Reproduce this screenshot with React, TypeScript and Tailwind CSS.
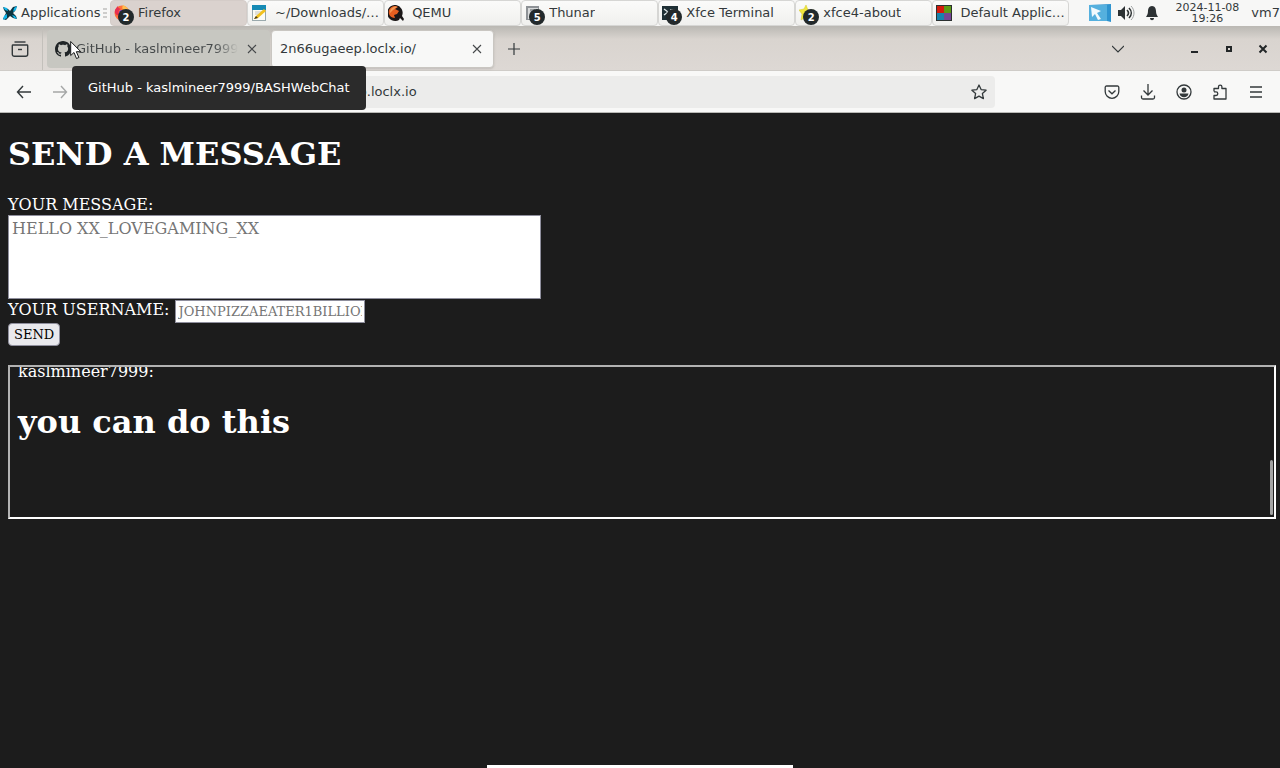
import type { ReactNode } from 'react';

interface TaskItem {
  title: string;
  icon: ReactNode;
  count?: number;
  active?: boolean;
}

function XfceLogo() {
  return (
    <svg viewBox="0 0 16 16" className="size-4 shrink-0" aria-hidden="true">
      <path d="M1 2l5 2 2 2 3-4 4-1-2 5-2 2 3 3 1 3-4-1-3-2-4 4-3-1 2-4 1-2-2-3z" fill="#0b3440" />
      <path d="M1 2l4 1 1 3-3-1zM15 1l-1 4-3 2 1-4zM1 15l1-4 3-2v4zM15 14l-3-1-2-3 3 1z" fill="#10b5ea" />
    </svg>
  );
}

function FirefoxIcon() {
  return (
    <svg viewBox="0 0 16 16" className="size-4" aria-hidden="true">
      <circle cx="8" cy="8" r="7.5" fill="#ff7139" />
      <path d="M1 5c1-2 2-3 3-4 0 2 1 2 3 3-3 1-3 4-1 6-3 1-6-1-5-5z" fill="#e8304f" />
      <path d="M9 0c4 2 6 4 6 8-1-2-3-3-5-3S8 2 9 0z" fill="#ffbd4f" />
      <circle cx="8" cy="8" r="3" fill="#7542e5" />
    </svg>
  );
}

function EditorIcon() {
  return (
    <svg viewBox="0 0 16 16" className="size-4" aria-hidden="true">
      <rect x="1.5" y=".5" width="13" height="15" fill="#fbfbf5" stroke="#9aa9ad" />
      <rect x="1" y="0" width="14" height="5" fill="#178bb5" />
      <path d="M4 7h7M4 9h5" stroke="#c5c5c0" />
      <path d="M13 4l2 2-8 7-4 1 2-3z" fill="#f2c11d" />
      <path d="M5 11l2 2-4 1z" fill="#4b3b18" />
    </svg>
  );
}

function QemuIcon() {
  return (
    <svg viewBox="0 0 16 16" className="size-4" aria-hidden="true">
      <path d="M8 0a8 8 0 1 0 3 15l1-2 3 3 1-2-2-3A8 8 0 0 0 8 0z" fill="#1b1717" />
      <path d="M1 5c2-4 6-5 9-3L7 4l4 2-2 3-3 1 1 3C2 13 0 9 1 5z" fill="#e65f20" />
      <path d="M3 4c2-2 4-3 6-2L5 5l-3 3c0-1 0-3 1-4z" fill="#f59a55" />
    </svg>
  );
}

function ThunarIcon() {
  return (
    <svg viewBox="0 0 16 16" className="size-4" aria-hidden="true">
      <rect x="1" y="1" width="13" height="14" fill="#8e9296" />
      <rect x="3" y="3" width="10" height="11" fill="#d8dadb" />
      <path d="M5 5h5M5 8h5M5 11h5" stroke="#5b6063" />
    </svg>
  );
}

function TerminalIcon() {
  return (
    <svg viewBox="0 0 16 16" className="size-4" aria-hidden="true">
      <rect x="0" y="1" width="16" height="14" fill="#1f3035" />
      <path d="M2 4l4 3-4 3M8 5h5" fill="none" stroke="#e6eded" strokeWidth="1.3" />
    </svg>
  );
}

function StarIcon() {
  return (
    <svg viewBox="0 0 16 16" className="size-4" aria-hidden="true">
      <path d="M7 0l2 5 6 0-4 4 2 6-6-3-5 3 1-6-3-4 5-1z" fill="#f0e63c" stroke="#d5c92d" strokeWidth=".5" />
    </svg>
  );
}

function DefaultAppsIcon() {
  return (
    <svg viewBox="0 0 16 16" className="size-4" aria-hidden="true">
      <rect width="16" height="16" fill="#2b3030" />
      <rect x="1" y="1" width="7" height="7" fill="#d21a0c" />
      <rect x="8" y="1" width="7" height="7" fill="#5c9a14" />
      <rect x="1" y="8" width="7" height="7" fill="#1683ac" />
      <rect x="8" y="8" width="7" height="7" fill="#744594" />
    </svg>
  );
}

const tasks: TaskItem[] = [
  { title: 'Firefox', icon: <FirefoxIcon />, count: 2, active: true },
  { title: '~/Downloads/…', icon: <EditorIcon /> },
  { title: 'QEMU', icon: <QemuIcon /> },
  { title: 'Thunar', icon: <ThunarIcon />, count: 5 },
  { title: 'Xfce Terminal', icon: <TerminalIcon />, count: 4 },
  { title: 'xfce4-about', icon: <StarIcon />, count: 2 },
  { title: 'Default Applic…', icon: <DefaultAppsIcon /> },
];

function TaskButton({ title, icon, count, active }: TaskItem) {
  return (
    <button
      type="button"
      className={`flex h-full min-w-0 flex-1 items-center gap-2 rounded-sm border pl-[3px] text-left ${
        active
          ? 'border-[#d4ccc8] bg-[#dad2ce]'
          : 'border-[#d6d6d4] bg-gradient-to-b from-[#fbfbfa] to-[#f0f0ee]'
      }`}
    >
      <span className="relative shrink-0">
        {icon}
        {count && (
          <span className="absolute top-1 left-1 flex size-4 items-center justify-center rounded-full bg-[#22292b] text-[10px] font-bold text-white">
            {count}
          </span>
        )}
      </span>
      <span className="truncate">{title}</span>
    </button>
  );
}

function Panel() {
  return (
    <header className="flex h-[26px] items-center bg-[#f7f7f6] text-[13px] text-[#33393b]">
      <button type="button" className="flex w-[110px] shrink-0 items-center gap-[3px] pl-[2px]">
        <XfceLogo />
        Applications
        <svg viewBox="0 0 4 12" className="h-3 w-1 shrink-0" aria-hidden="true">
          <path d="M0 2h4M0 6h4M0 10h4" stroke="#a3a3a1" />
        </svg>
      </button>
      <nav className="flex h-full max-w-[960px] flex-1" aria-label="Open windows">
        {tasks.map((task) => (
          <TaskButton key={task.title} {...task} />
        ))}
      </nav>
      <div className="ml-auto flex shrink-0 items-center pl-5">
        <svg viewBox="0 0 22 20" className="h-5 w-[22px]" aria-hidden="true">
          <path d="M0 2l22-1v18l-4-1H0z" fill="#2e93cf" />
          <path d="M0 2h18v16H0z" fill="#55b0de" />
          <path d="M2 4l10 4-4 2 4 6-3 1-3-6-3 3z" fill="#f2fafd" />
        </svg>
        <svg viewBox="0 0 18 16" className="ml-[6px] h-4 w-[18px]" fill="none" stroke="#2d3234" strokeWidth="1.6" aria-hidden="true">
          <path d="M1 5h3l4-4v14l-4-4H1z" fill="#2d3234" stroke="none" />
          <path d="M10 5c2 2 2 4 0 6M12 3c3 3 3 7 0 10" />
          <path d="M14 1c4 4 4 10 0 14" stroke="#9da0a1" strokeWidth="1" />
        </svg>
        <svg viewBox="0 0 14 16" className="ml-[10px] h-4 w-[14px]" fill="#2d3234" aria-hidden="true">
          <path d="M7 1C4 1 3 4 3 6c0 3-1 4-2 6h12c-1-2-2-3-2-6 0-2-1-5-4-5zM5 13h4c0 3-4 3-4 0z" />
        </svg>
        <time className="ml-4 text-center text-[11px] leading-[11px]">
          2024-11-08
          <br />
          19:26
        </time>
        <span className="ml-3">vm7</span>
      </div>
    </header>
  );
}

function GithubMark() {
  return (
    <svg viewBox="0 0 16 16" className="size-4 shrink-0" fill="#1f2426" aria-hidden="true">
      <path d="M8 0c4.42 0 8 3.58 8 8a8.01 8.01 0 0 1-5.45 7.59c-.4.08-.55-.17-.55-.38 0-.27.01-1.13.01-2.2 0-.75-.25-1.23-.54-1.48 1.78-.2 3.65-.88 3.65-3.95 0-.88-.31-1.59-.82-2.15.08-.2.36-1.02-.08-2.12 0 0-.67-.22-2.2.82-.64-.18-1.32-.27-2-.27-.68 0-1.36.09-2 .27-1.53-1.03-2.2-.82-2.2-.82-.44 1.1-.16 1.92-.08 2.12-.51.56-.82 1.28-.82 2.15 0 3.06 1.86 3.75 3.64 3.95-.23.2-.44.55-.51 1.07-.46.21-1.61.55-2.33-.66-.15-.24-.6-.83-1.23-.82-.67.01-.27.38.01.53.34.19.73.9.82 1.13.16.45.68 1.31 2.69.94 0 .67.01 1.3.01 1.49 0 .21-.15.45-.55.38A8 8 0 0 1 0 8c0-4.42 3.58-8 8-8z" />
    </svg>
  );
}

function CloseIcon() {
  return (
    <svg viewBox="0 0 10 10" className="size-[10px]" fill="none" stroke="#45484a" strokeWidth="1.1" aria-hidden="true">
      <path d="M1 1l8 8M9 1l-8 8" />
    </svg>
  );
}

function TabBar() {
  return (
    <div className="flex h-[45px] items-center border-b border-[#cfccc8] bg-gradient-to-b from-[#bab8b3] via-[#d9d4cf] via-30% to-[#ddd8d4] pt-[2px] text-[13px] text-[#33393b]">
      <button type="button" aria-label="View recent browsing" className="flex h-full w-[43px] shrink-0 items-center justify-center border-r border-[#c3c0bb] pr-[2px]">
        <svg viewBox="0 0 18 16" className="h-4 w-[18px]" fill="none" stroke="#33393b" strokeWidth="1.4" aria-hidden="true">
          <path d="M3.5 1h11" />
          <path d="M2 4h14a.7.7 0 0 1 .7.7v8.6a2 2 0 0 1-2 2H3.3a2 2 0 0 1-2-2V4.7A.7.7 0 0 1 2 4z" />
          <path d="M7 8.5h4" />
        </svg>
      </button>

      <div className="relative ml-1 flex h-[38px] w-[223px] items-center rounded-sm bg-[#c7c7c1] px-2">
        <GithubMark />
        <a
          href="#github"
          className="ml-[5px] flex-1 overflow-hidden bg-gradient-to-r from-[#45494a] from-85% to-[#c7c7c1] bg-clip-text whitespace-nowrap text-transparent"
        >
          GitHub - kaslmineer7999
        </a>
        <button type="button" aria-label="Close tab" className="ml-1 p-[5px]">
          <CloseIcon />
        </button>
        <svg viewBox="0 0 12 20" className="absolute top-[10px] left-[23px] z-20 h-5 w-3" aria-hidden="true">
          <path d="M.7 1.5v14l3.3-3 2.5 6 2.4-1-2.6-5.8h4.5z" fill="#fff" stroke="#17191a" />
        </svg>
        <div
          role="tooltip"
          className="absolute top-9 left-[25px] z-10 flex h-11 items-center rounded-sm bg-[#2b2b2b] px-4 whitespace-nowrap text-white"
        >
          GitHub - kaslmineer7999/BASHWebChat
        </div>
      </div>

      <div className="ml-px flex h-[38px] w-[223px] items-center rounded-sm border border-[#c9c6c1] bg-[#f8f8f7] pr-[6px] pl-2 shadow-sm">
        <a href="#chat" className="flex-1">2n66ugaeep.loclx.io/</a>
        <button type="button" aria-label="Close tab" className="p-[5px]">
          <CloseIcon />
        </button>
      </div>

      <button type="button" aria-label="New tab" className="ml-[14px]">
        <svg viewBox="0 0 12 12" className="size-3" stroke="#33393b" strokeWidth="1.2" aria-hidden="true">
          <path d="M6 0v12M0 6h12" />
        </svg>
      </button>

      <button type="button" aria-label="List all tabs" className="ml-auto">
        <svg viewBox="0 0 12 8" className="h-2 w-3" fill="none" stroke="#33393b" strokeWidth="1.2" aria-hidden="true">
          <path d="M0 1l6 6 6-6" />
        </svg>
      </button>
      <div className="ml-[66px] flex items-center gap-[25px] pr-3">
        <button type="button" aria-label="Minimize">
          <svg viewBox="0 0 10 10" className="size-[10px]" aria-hidden="true">
            <path d="M1 7h7v2H1z" fill="#222627" />
          </svg>
        </button>
        <button type="button" aria-label="Maximize">
          <svg viewBox="0 0 8 8" className="size-2" fill="none" stroke="#222627" strokeWidth="2" aria-hidden="true">
            <path d="M2 2h4v4H2z" />
          </svg>
        </button>
        <button type="button" aria-label="Close window">
          <svg viewBox="0 0 10 10" className="size-[10px]" stroke="#222627" strokeWidth="2" aria-hidden="true">
            <path d="M1.5 1.5l7 7M8.5 1.5l-7 7" />
          </svg>
        </button>
      </div>
    </div>
  );
}

function NavBar() {
  return (
    <div className="flex h-[42px] items-center border-b border-[#b9b9b6] bg-[#f8f8f7] px-4 text-[13px] text-[#33393b]">
      <div className="flex w-[67px] shrink-0 gap-5">
        <button type="button" aria-label="Back">
          <svg viewBox="0 0 16 16" className="size-4" fill="none" stroke="#33393b" strokeWidth="1.4" aria-hidden="true">
            <path d="M15 8H1.5M7 2L1.5 8 7 14" />
          </svg>
        </button>
        <button type="button" aria-label="Forward">
          <svg viewBox="0 0 16 16" className="size-4" fill="none" stroke="#a5a7a7" strokeWidth="1.4" aria-hidden="true">
            <path d="M1 8h13.5M9 2l5.5 6L9 14" />
          </svg>
        </button>
      </div>
      <div className="mr-[109px] ml-[28px] flex h-8 flex-1 items-center rounded-sm bg-[#ececeb] pr-2 pl-[174px]">
        <input
          type="text"
          aria-label="Address"
          defaultValue="2n66ugaeep.loclx.io"
          className="min-w-0 flex-1 bg-transparent outline-none"
        />
        <button type="button" aria-label="Bookmark this page">
          <svg viewBox="0 0 16 16" className="size-4" fill="none" stroke="#33393b" strokeWidth="1.3" strokeLinejoin="round" aria-hidden="true">
            <path d="M8 1l2.1 4.6 5 .6-3.7 3.4 1 5L8 12.1l-4.4 2.5 1-5L.9 6.2l5-.6z" />
          </svg>
        </button>
      </div>
      <div className="flex shrink-0 items-center gap-5">
        <button type="button" aria-label="Save to Pocket">
          <svg viewBox="0 0 16 16" className="size-4" fill="none" stroke="#33393b" strokeWidth="1.3" aria-hidden="true">
            <path d="M2.5 2h11a1.3 1.3 0 0 1 1.3 1.3v4.2a6.8 6.8 0 0 1-13.6 0V3.3A1.3 1.3 0 0 1 2.5 2z" />
            <path d="M4.5 6.5L8 9.8l3.5-3.3" />
          </svg>
        </button>
        <button type="button" aria-label="Downloads">
          <svg viewBox="0 0 16 16" className="size-4" fill="none" stroke="#33393b" strokeWidth="1.3" aria-hidden="true">
            <path d="M8 0v10.5M3.5 6.5L8 11l4.5-4.5M1.5 11.5v2A1.5 1.5 0 0 0 3 15h10a1.5 1.5 0 0 0 1.5-1.5v-2" />
          </svg>
        </button>
        <button type="button" aria-label="Account">
          <svg viewBox="0 0 16 16" className="size-4" aria-hidden="true">
            <circle cx="8" cy="8" r="7" fill="none" stroke="#33393b" strokeWidth="1.3" />
            <circle cx="8" cy="6" r="2.5" fill="#33393b" />
            <path d="M3.5 9.5h9c-.5 2.5-2.2 3.7-4.5 3.7s-4-1.2-4.500-3.7z" fill="#33393b" />
          </svg>
        </button>
        <button type="button" aria-label="Extensions">
          <svg viewBox="0 0 16 16" className="size-4" fill="none" stroke="#33393b" strokeWidth="1.3" strokeLinejoin="round" aria-hidden="true">
            <path d="M2 7.5v-3h4.5V2.8a1.7 1.7 0 0 1 3.4 0v1.7H14V15H2v-3.5h2a1.8 1.8 0 0 0 0-3.6H2" />
          </svg>
        </button>
        <button type="button" aria-label="Open application menu">
          <svg viewBox="0 0 16 16" className="size-4" stroke="#33393b" strokeWidth="1.3" aria-hidden="true">
            <path d="M2 3h12M2 8h12M2 13h12" />
          </svg>
        </button>
      </div>
    </div>
  );
}

function ChatPage() {
  return (
    <main className="pt-[22px] pr-1 pl-2">
      <h1 className="text-[32px] leading-[38px] font-bold">SEND A MESSAGE</h1>
      <form className="mt-[22px] flex flex-col items-start" onSubmit={(e) => e.preventDefault()}>
        <label htmlFor="message">YOUR MESSAGE:</label>
        <textarea
          id="message"
          placeholder="HELLO XX_LOVEGAMING_XX"
          className="mt-px h-[84px] w-[533px] max-w-full resize-none border border-[#8f8f9d] bg-white px-[3px] py-[3px] text-black placeholder:text-[#757575]"
        />
        <div className="mt-px flex items-start gap-[6px]">
          <label htmlFor="username">YOUR USERNAME:</label>
          <input
            id="username"
            type="text"
            placeholder="JOHNPIZZAEATER1BILLION"
            className="h-[23px] w-[190px] border border-[#8f8f9d] bg-white px-[2px] text-[13px] text-black placeholder:text-[#757575]"
          />
        </div>
        <button type="submit" className="h-[23px] rounded-sm border border-[#8f8f9d] bg-[#e9e9ed] px-[5px] text-[13px] text-black">
          SEND
        </button>
      </form>

      <section
        aria-label="Messages"
        className="mt-[19px] flex h-[154px] justify-between overflow-hidden border-2 border-t-[#b2b2b2] border-r-white border-b-white border-l-[#b2b2b2]"
      >
        <div className="flex flex-col justify-end px-2 pb-[76px]">
          <p>kaslmineer7999:</p>
          <h2 className="mt-[22px] text-[32px] leading-[38px] font-bold">you can do this</h2>
        </div>
        <div className="mr-px mb-[2px] h-[55px] w-[3px] self-end rounded-full bg-[#a3a3a3]" />
      </section>
    </main>
  );
}

export default function App() {
  return (
    <div className="flex min-h-screen flex-col font-['DejaVu_Sans',sans-serif]">
      <Panel />
      <TabBar />
      <NavBar />
      <div className="flex flex-1 flex-col bg-[#1c1c1c] font-['DejaVu_Serif',serif] text-base leading-[19px] text-white">
        <ChatPage />
        <div className="mt-auto h-[3px] w-[306px] self-center bg-white" />
      </div>
    </div>
  );
}
